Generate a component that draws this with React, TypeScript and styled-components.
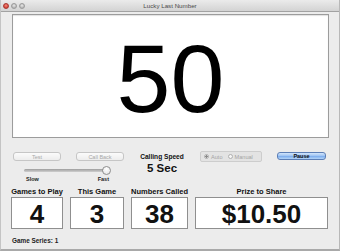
import React from 'react';
import styled, { createGlobalStyle } from 'styled-components';

const Global = createGlobalStyle`
  html, body {
    margin: 0;
    padding: 0;
    background: #ececec;
  }
  body {
    font-family: "Liberation Sans", Arial, sans-serif;
  }
`;

const Window = styled.div`
  width: 340px;
  height: 251px;
  box-sizing: border-box;
  display: flex;
  flex-direction: column;
  background: #ececec;
  border-left: 1px solid #c4c4c4;
  border-right: 1px solid #b8b8b8;
  border-bottom: 2px solid #a9a9a9;
  overflow: hidden;
`;

const TitleBar = styled.div`
  position: relative;
  height: 12px;
  flex-shrink: 0;
  display: flex;
  align-items: center;
  justify-content: center;
  background: linear-gradient(#ebebeb, #d3d3d3);
  border-bottom: 1px solid #a2a2a2;
  box-sizing: border-box;
`;

const Lights = styled.div`
  position: absolute;
  left: 2px;
  top: 3px;
  display: flex;
  gap: 2px;
`;

const Light = styled.span<{ $red?: boolean }>`
  width: 6px;
  height: 6px;
  border-radius: 50%;
  box-sizing: border-box;
  border: 0.5px solid ${(p) => (p.$red ? '#a8342c' : '#9a9a9a')};
  background: ${(p) =>
    p.$red
      ? 'radial-gradient(circle at 50% 35%, #f28c80, #d6453a 70%)'
      : 'radial-gradient(circle at 50% 35%, #e8e8e8, #b7b7b7 70%)'};
`;

const Title = styled.span`
  font-size: 6.2px;
  color: #4a4a4a;
`;

const Display = styled.div`
  margin: 2px 10px 0 11px;
  height: 124px;
  box-sizing: border-box;
  background: #fff;
  border: 1px solid #9c9c9c;
  box-shadow: inset 0 1px 1px rgba(0, 0, 0, 0.12);
  display: flex;
  align-items: center;
  justify-content: center;
  padding-top: 4px;
  font-size: 97px;
  line-height: 1;
  color: #000;
`;

const Controls = styled.div`
  margin-top: 13px;
  height: 31px;
  display: flex;
  align-items: flex-start;
  padding-left: 12px;
`;

const LeftControls = styled.div`
  width: 111px;
  display: flex;
  flex-direction: column;
`;

const ButtonRow = styled.div`
  margin-top: 1px;
  display: flex;
  gap: 15px;
`;

const PlainButton = styled.div`
  width: 48px;
  height: 9px;
  box-sizing: border-box;
  border: 1px solid #c6c6c6;
  border-radius: 3px;
  background: linear-gradient(#fbfbfb, #ededed);
  color: #a8a8a8;
  font-size: 5.5px;
  display: flex;
  align-items: center;
  justify-content: center;
`;

const SliderBox = styled.div`
  position: relative;
  margin: 5px 0 0 11px;
  width: 88px;
  height: 9px;
`;

const Track = styled.div`
  position: absolute;
  left: 0;
  top: 3px;
  width: 85px;
  height: 3px;
  border-radius: 2px;
  background: linear-gradient(#9d9d9d, #cfcfcf);
`;

const Knob = styled.div`
  position: absolute;
  left: 78px;
  top: 0;
  width: 9px;
  height: 9px;
  box-sizing: border-box;
  border-radius: 50%;
  border: 1px solid #8e8e8e;
  background: radial-gradient(circle at 50% 30%, #ffffff, #e2e2e2);
`;

const SpeedLabels = styled.div`
  margin: 1px 0 0 13px;
  width: 83px;
  display: flex;
  justify-content: space-between;
  font-size: 5.5px;
  line-height: 6px;
  font-weight: bold;
  color: #222;
`;

const SpeedBlock = styled.div`
  margin-left: 7px;
  width: 62px;
  display: flex;
  flex-direction: column;
  align-items: center;
  color: #111;
`;

const SpeedTitle = styled.div`
  margin-top: 2px;
  font-size: 6.6px;
  font-weight: bold;
  line-height: 7px;
`;

const SpeedValue = styled.div`
  margin-top: 2px;
  font-size: 11.5px;
  font-weight: bold;
  line-height: 12px;
`;

const RadioGroup = styled.div`
  margin-left: 7px;
  width: 62px;
  height: 11px;
  box-sizing: border-box;
  border: 1px solid #cdcdcd;
  border-radius: 2px;
  background: #e3e3e3;
  display: flex;
  align-items: center;
  gap: 5px;
  padding-left: 3px;
`;

const RadioItem = styled.div`
  display: flex;
  align-items: center;
  gap: 2px;
  font-size: 5.6px;
  color: #a3a3a3;
`;

const RadioDot = styled.span<{ $on?: boolean }>`
  width: 5px;
  height: 5px;
  box-sizing: border-box;
  border-radius: 50%;
  border: 0.5px solid #b0b0b0;
  background: ${(p) =>
    p.$on ? 'radial-gradient(circle, #8a8a8a 0 1px, #f6f6f6 1.2px)' : '#f6f6f6'};
`;

const PauseButton = styled.div`
  margin: 1px 0 0 15px;
  width: 49px;
  height: 8px;
  box-sizing: border-box;
  border: 1px solid #5d7fb6;
  border-radius: 3px;
  background: linear-gradient(#d3e6fc, #9cc2f2 50%, #7eaeee 55%, #b4d5f8);
  color: #111;
  font-size: 5.5px;
  font-weight: bold;
  display: flex;
  align-items: center;
  justify-content: center;
`;

const Stats = styled.div`
  margin: 6px 0 0 10px;
  display: grid;
  grid-template-columns: 52px 54px 57px 133px;
  column-gap: 7px;
  row-gap: 1px;
`;

const StatLabel = styled.div`
  height: 8px;
  font-size: 7.5px;
  line-height: 8px;
  font-weight: bold;
  color: #111;
  text-align: center;
  white-space: nowrap;
`;

const StatBox = styled.div`
  height: 32px;
  box-sizing: border-box;
  background: #fff;
  border: 1px solid #8f8f8f;
  display: flex;
  align-items: center;
  justify-content: center;
  padding-top: 2px;
  font-size: 26px;
  font-weight: bold;
  color: #111;
`;

const Footer = styled.div`
  margin: 8px 0 0 11px;
  font-size: 6.4px;
  line-height: 8px;
  font-weight: bold;
  color: #222;
`;

const stats = [
  { label: 'Games to Play', value: '4' },
  { label: 'This Game', value: '3' },
  { label: 'Numbers Called', value: '38' },
  { label: 'Prize to Share', value: '$10.50' },
];

export default function App() {
  return (
    <>
      <Global />
      <Window>
        <TitleBar>
          <Lights>
            <Light $red />
            <Light />
            <Light />
          </Lights>
          <Title>Lucky Last Number</Title>
        </TitleBar>
        <Display>50</Display>
        <Controls>
          <LeftControls>
            <ButtonRow>
              <PlainButton>Test</PlainButton>
              <PlainButton>Call Back</PlainButton>
            </ButtonRow>
            <SliderBox>
              <Track />
              <Knob />
            </SliderBox>
            <SpeedLabels>
              <span>Slow</span>
              <span>Fast</span>
            </SpeedLabels>
          </LeftControls>
          <SpeedBlock>
            <SpeedTitle>Calling Speed</SpeedTitle>
            <SpeedValue>5 Sec</SpeedValue>
          </SpeedBlock>
          <RadioGroup>
            <RadioItem>
              <RadioDot $on />
              Auto
            </RadioItem>
            <RadioItem>
              <RadioDot />
              Manual
            </RadioItem>
          </RadioGroup>
          <PauseButton>Pause</PauseButton>
        </Controls>
        <Stats>
          {stats.map((s) => (
            <StatLabel key={s.label}>{s.label}</StatLabel>
          ))}
          {stats.map((s) => (
            <StatBox key={s.label}>{s.value}</StatBox>
          ))}
        </Stats>
        <Footer>Game Series: 1</Footer>
      </Window>
    </>
  );
}
